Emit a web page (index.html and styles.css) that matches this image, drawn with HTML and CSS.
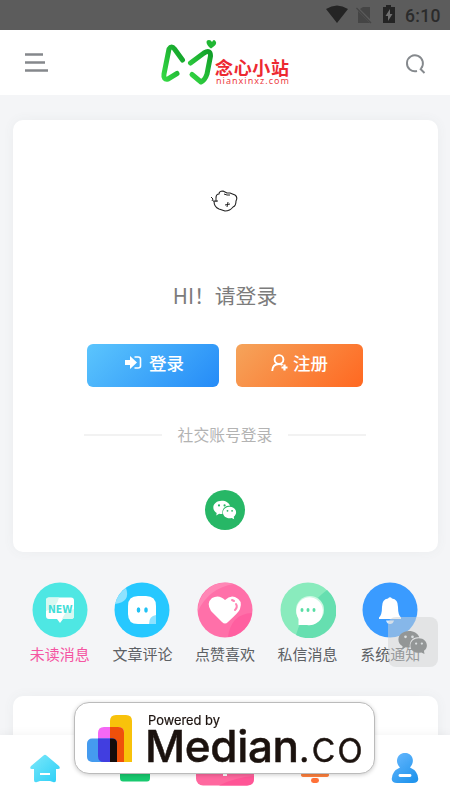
FILE: index.html
```html
<!DOCTYPE html>
<html lang="zh-CN">
<head>
<meta charset="utf-8">
<meta name="viewport" content="width=device-width, initial-scale=1">
<title>念心小站</title>
<link rel="stylesheet" href="styles.css">
</head>
<body>
<div class="statusbar">
  <svg class="status-icons" width="72" height="22" viewBox="0 0 72 22">
    <path d="M1 5Q12-2 23 5L12 19Z" fill="#242424"/>
    <path d="M38 3H45V15L35 5ZM33 7L45 19H33Z" fill="#454545"/>
    <path d="M31.500 4L46 19" stroke="#454545" stroke-width="1.300"/>
    <path d="M58 3H61V1H66V3H70V19H58Z" fill="#242424"/>
    <path d="M65 5L60.500 12H63V17L67.500 10H65Z" fill="#707070"/>
  </svg>
  <span class="clock">6:10</span>
</div>
<header class="header">
  <svg class="menu" width="24" height="21" viewBox="0 0 24 21"><path d="M0 2.500H18M0 10.500H20M0 18.500H23" stroke="#85888c" stroke-width="2.400"/></svg>
  <svg class="logo" width="132" height="48" viewBox="0 0 132 48">
    <defs><linearGradient id="green" x1="0" y1="1" x2="1" y2="0"><stop stop-color="#35d844"/><stop offset="1" stop-color="#109e28"/></linearGradient></defs>
    <path d="M22.500 21L14.500 10Q11.500 6 9 10L4 35Q3 41 8 40L17 34.500" fill="none" stroke="url(#green)" stroke-width="5" stroke-linecap="round" stroke-linejoin="round"/>
    <path d="M30.500 24L44 14Q50.500 10 50.500 17L47 35Q45 41 41 43L32 35.500" fill="none" stroke="url(#green)" stroke-width="5" stroke-linecap="round" stroke-linejoin="round"/>
    <path d="M51 9.500C46 6 45 1 49 1Q51 1 52 3Q54 -1 56 3C57 6 53 8 51 9.500Z" fill="#20b733"/>
    <text class="logo-cn" x="55" y="35.500" textLength="74">念心小站</text>
    <text class="logo-en" x="56" y="45" textLength="73">nianxinxz.com</text>
  </svg>
  <svg class="search" width="22" height="22" viewBox="0 0 22 22"><path d="M12 18A8 8 0 1 1 16 15.500M15 15.500L19.500 20" fill="none" stroke="#85898d" stroke-width="1.900"/></svg>
</header>
<main class="page">
  <section class="card login">
    <svg class="avatar" width="28" height="24" viewBox="0 0 28 24" fill="none" stroke="#222" stroke-width="1.100" stroke-linejoin="round">
      <path d="M6 9Q6 5 9 5Q9 2 13 2L17 4L20 4L25 6Q28 8 26 12Q26 17 23 18Q20 22 15 22L9 20Q4 18 4 12"/><path d="M3 12L8 12M6 9V13M1 8L3 10L2 12M14 5L17 6L20 6M15 16L20 15M18 13L17 18" stroke-width="1"/>
    </svg>
    <p class="hello">HI！请登录</p>
    <div class="actions">
      <button class="btn btn-login">
        <svg width="17" height="14" viewBox="0 0 17 14"><path d="M0 4H5V0L12 6.500L5 13V9H0Z" fill="#fff"/><path d="M9.500 1H13Q15.500 1 15.500 3V10Q15.500 12 13 12H9.500" fill="none" stroke="#fff" stroke-width="1.600"/></svg>
        <span>登录</span>
      </button>
      <button class="btn btn-register">
        <svg width="18" height="18" viewBox="0 0 18 18" fill="none" stroke="#fff"><circle cx="8" cy="5.500" r="4.400" stroke-width="1.900"/><path d="M1.200 17Q1.500 10 8 10Q10 10 11.500 11" stroke-width="1.900"/><path d="M13.500 10.500V16.500M10.500 13.500H16.500" stroke-width="2.200"/></svg>
        <span>注册</span>
      </button>
    </div>
    <div class="divider"><span>社交账号登录</span></div>
    <div class="wechat">
      <svg width="24" height="20" viewBox="0 0 28 24"><use href="#wechat"/></svg>
    </div>
  </section>

  <nav class="shortcuts">
    <a class="shortcut active">
      <svg width="56" height="56" viewBox="0 0 56 56"><circle cx="28" cy="28" r="27.500" fill="#4ee7e3"/><path d="M17 15.500H39Q42 15.500 42 18.500V34Q42 37 39 37H31L28 41L25 37H17Q14 37 14 34V18.500Q14 15.500 17 15.500Z" fill="#fff"/><path d="M14 29V18.500Q14 15.500 17 15.500H27Q25 26 14 29ZM42 27V34Q42 37 39 37H30Q33 29 42 27Z" fill="#d8f8f1"/><text class="new" x="16" y="31" textLength="24.500" lengthAdjust="spacingAndGlyphs">NEW</text></svg>
      <span>未读消息</span>
    </a>
    <a class="shortcut">
      <svg width="56" height="56" viewBox="0 0 56 56"><circle cx="28" cy="28" r="27.500" fill="#26c8ff"/><path d="M1 22A27.500 27.500 0 0 1 12 6Q17 20 1 22Z" fill="#8ee2ff"/><path d="M24 14H32Q42 14 42 24V42H24Q14 42 14 32V24Q14 14 24 14Z" fill="#fff"/><path d="M42 33V42H35Q35 34 42 33Z" fill="#8ee2ff"/><ellipse cx="24.500" cy="28" rx="1.800" ry="2.700" fill="#20c2f5"/><ellipse cx="32" cy="28" rx="1.800" ry="2.700" fill="#20c2f5"/></svg>
      <span>文章评论</span>
    </a>
    <a class="shortcut">
      <svg width="56" height="56" viewBox="0 0 56 56"><circle cx="28" cy="28" r="27.500" fill="#ff70a9"/><path d="M1 29A27.500 27.500 0 0 1 37 2Q12 6 1 29Z" fill="#ff87b6"/><path d="M31 55A27.500 27.500 0 0 0 55 31Q34 32 31 55Z" fill="#ff5fa0"/><path d="M28 18Q33 13 38 15Q46 18 43 27Q42 30 31 40Q28 43 25 40L14 29Q9 21 15 16Q22 12 28 18Z" fill="#fff"/><path d="M35 18L37 19M39 22Q41 25 38 28" fill="none" stroke="#ff85b5" stroke-width="2" stroke-linecap="round"/></svg>
      <span>点赞喜欢</span>
    </a>
    <a class="shortcut">
      <svg width="56" height="56" viewBox="0 0 56 56"><circle cx="28" cy="28" r="27.500" fill="#89ebbd"/><path d="M47 8A27.500 27.500 0 0 1 16 53Q24 25 47 8Z" fill="#66dfb0"/><circle cx="30" cy="28" r="14" fill="#cdf8e3"/><path d="M18.500 43V37A13.300 14 0 1 1 27 43Z" fill="#fff"/><g fill="#58dda4"><ellipse cx="22" cy="28" rx="1.500" ry="2"/><ellipse cx="28" cy="28" rx="1.500" ry="2"/><ellipse cx="34" cy="28" rx="1.500" ry="2"/></g></svg>
      <span>私信消息</span>
    </a>
    <a class="shortcut">
      <svg width="56" height="56" viewBox="0 0 56 56"><circle cx="28" cy="28" r="27.500" fill="#3a9bff"/><path d="M17 37V35.500Q20 33 20 25Q20 17 26 16.500Q28 14 30 16.500Q36 17 36 25Q36 33 39 35.500V37Z" fill="#fff"/><path d="M24 38.500H32Q31 42 28 42Q25 42 24 38.500Z" fill="#d9ebff"/></svg>
      <span>系统通知</span>
    </a>
  </nav>
  <section class="card next-card"></section>
</main>

<a class="contact"><svg width="30" height="25" viewBox="0 0 28 24">
  <g id="wechat"><path class="bubble" d="M10 1C4.500 1 0 4.500 0 9C0 12 1.500 14 4 15.500L3.500 18.500L7 16.500Q10 17.300 11 16.500C10 10 15 6 20 7C19 3.500 15 1 10 1Z"/><path class="bubble" d="M19.500 8C15 8 11.500 11 11.500 15C11.500 20 17 23 22 21.500L25 23L24.500 20C30 16 27 8 19.500 8Z"/><g class="eyes"><circle cx="6.800" cy="6.500" r="1.300"/><circle cx="13.500" cy="6.500" r="1.300"/><circle cx="17" cy="13" r="1.100"/><circle cx="22.500" cy="13" r="1.100"/></g></g>
</svg></a>

<nav class="tabbar">
  <a class="tab"><svg width="32" height="30" viewBox="0 0 32 30"><defs><linearGradient id="home" x2="1" y2="1"><stop stop-color="#7de8fa"/><stop offset="1" stop-color="#2bcff7"/></linearGradient></defs><path d="M14.500 1.500Q16 0 17.500 1.500L30 12Q32 15 29 15H27V26Q27 29 24 28L21 27H11L8 28Q5 29 5 26V15H3Q0 15 2 12Z" fill="url(#home)"/><path d="M11 20H21" stroke="#fff" stroke-width="2"/></svg></a>
  <a class="tab"><svg width="32" height="30" viewBox="0 0 32 30"><path d="M1 1H31V24Q31 27.500 28 27.500H4Q1 27.500 1 24Z" fill="#18c96f"/></svg></a>
  <a class="tab"><svg width="58" height="40" viewBox="0 0 58 40"><rect x="0" y="0" width="58" height="38.500" rx="7" fill="#ff689f"/><path d="M23 38.500Q40 30 58 29V32Q58 38.500 51 38.500Z" fill="#ff5596"/><path d="M29 15V29" stroke="#fff" stroke-width="4"/></svg></a>
  <a class="tab"><svg width="32" height="30" viewBox="0 0 32 30"><path d="M5 3H27L30 21Q30 23 27 23H5Q2 23 2 21Z" fill="#ff813e"/><rect x="12" y="24" width="8" height="5" rx="2.400" fill="#ff7138"/></svg></a>
  <a class="tab"><svg width="28" height="32" viewBox="0 0 28 32"><defs><linearGradient id="person" x2=".7" y2="1"><stop stop-color="#69b9ff"/><stop offset="1" stop-color="#2295ed"/></linearGradient></defs><path d="M9 15.500C3 9 7 1 14 1C21 1 25 9 19 15.500Q27 19 27.300 27Q27 31 22 31H6Q1 31 .700 27Q1 19 9 15.500Z" fill="url(#person)"/><path d="M9 23.500H19" stroke="#fff" stroke-width="2.800" stroke-linecap="round"/></svg></a>
</nav>

<aside class="median">
  <svg class="median-mark" width="46" height="48" viewBox="0 0 46 48">
    <path d="M23 47V6Q23 0 29 0H39Q45 0 45 6V47Z" fill="#f8c20b"/>
    <path d="M11 47V18Q11 12 17 12H31Q37 12 37 18V47Z" fill="#f568f5"/>
    <path d="M23 12H31Q37 12 37 18V47H23Z" fill="#ef500b"/>
    <rect y="23.500" width="30" height="23.500" rx="5" fill="#459bef"/>
    <path d="M11 23.500H25Q30 23.500 30 28.500V47H17Q11 47 11 41Z" fill="#413ee0"/>
    <path d="M23 23.500H25Q30 23.500 30 28.500V47H23Z" fill="#160d0b"/>
  </svg>
  <svg class="median-words" width="220" height="70" viewBox="0 0 220 70">
    <text class="powered" x="1" y="22" textLength="72" lengthAdjust="spacingAndGlyphs">Powered by</text>
    <text class="word" x="-2" y="59" textLength="154">Median</text>
    <text class="word light" x="151" y="59" textLength="65">.co</text>
  </svg>
</aside>
</body>
</html>
```

FILE: styles.css
```css
* { box-sizing: border-box; }
html, body { height: 100%; overflow: hidden; }
body {
  margin: 0;
  background: #f4f5f7;
  font-family: "Noto Sans CJK SC", sans-serif;
  color: #5c6064;
}
svg { display: block; flex: none; }
.statusbar {
  height: 30px;
  background: #5c5c5c;
  display: flex;
  align-items: center;
  justify-content: flex-end;
  padding-right: 10px;
  gap: 8px;
}
.status-icons { margin-top: -1px; }
.clock {
  font: 500 17.500px/30px Roboto, sans-serif;
  color: #2b2b2b;
  width: 35px;
  padding-top: 1px;
  letter-spacing: .3px;
  white-space: nowrap;
}
.header {
  height: 65px;
  background: #fff;
  display: flex;
  align-items: flex-start;
  padding: 9px 23px 0 25px;
}
.menu { margin-top: 13px; }
.logo { margin-left: 111px; overflow: visible; }
.search { margin: 14px 0 0 auto; }
.logo-cn { font-size: 18px; font-weight: 700; fill: #ed2931; }
.logo-en { font: 9px "Noto Sans", sans-serif; fill: #ed3b42; }
.page { padding: 25px 12.5px 0; }
.card {
  background: #fff;
  border-radius: 10px;
  box-shadow: 0 0 12px rgba(90, 100, 110, .06);
}
.login {
  height: 432px;
  display: flex;
  flex-direction: column;
  align-items: center;
  padding-top: 69px;
}
.avatar { margin-right: 3px; }
.hello {
  margin: 66px 0 0;
  font-size: 20.8px;
  line-height: 32px;
  color: #7c7c7c;
}
.actions { display: flex; gap: 17px; margin-top: 33px; }
.btn {
  height: 43px;
  border: 0;
  border-radius: 6px;
  display: flex;
  align-items: center;
  justify-content: center;
  padding: 0 0 5px;
  color: #fff;
  font: 500 17.500px/26px "Noto Sans CJK SC", sans-serif;
}
.btn-login { width: 132px; gap: 7px; padding-left: 3px; background: linear-gradient(135deg, #5bc5fd, #258bf7); }
.btn-register { width: 127px; gap: 4px; background: linear-gradient(135deg, #f5a45b, #ff6821); }
.divider {
  width: 282px;
  margin-top: 36px;
  display: flex;
  align-items: center;
  gap: 16px;
  font-size: 15.800px;
  line-height: 24px;
  color: #b3b3b3;
  white-space: nowrap;
}
.divider::before, .divider::after { content: ""; height: 2px; flex: 1; background: #f2f2f2; }
.wechat {
  width: 40px;
  height: 40px;
  margin-top: 43px;
  border-radius: 50%;
  background: #27b766;
  display: grid;
  place-items: center;
  color: #27b766;
  --bubble: #fff;
}
.bubble { fill: var(--bubble); }
.eyes { fill: currentColor; }
.shortcuts { display: flex; margin: 30px 6px 0; }
.shortcut {
  flex: 1;
  display: flex;
  flex-direction: column;
  align-items: center;
  font-size: 15px;
  line-height: 24px;
}
.shortcut span { margin-top: 4px; }
.active { color: #f555a2; }
.new { font: 700 11px "DejaVu Sans", sans-serif; fill: #43ded8; }
.next-card { height: 90px; margin-top: 30px; }
.contact {
  position: fixed;
  right: 12.5px;
  top: 617px;
  width: 50px;
  height: 50px;
  border-radius: 8px;
  background: rgba(210, 212, 212, .5);
  display: grid;
  place-items: center;
  color: #dadedf;
  --bubble: #939696;
}
.tabbar {
  position: fixed;
  left: 0;
  right: 0;
  bottom: 0;
  height: 65px;
  background: #fff;
  display: flex;
  justify-content: space-around;
  align-items: flex-end;
  padding-bottom: 16px;
  box-shadow: 0 0 10px rgba(0, 0, 0, .06);
}
.tab { width: 90px; display: flex; justify-content: center; }
.tab:nth-child(3) { margin-bottom: -3px; }
.median {
  position: fixed;
  left: 74px;
  top: 702px;
  width: 301px;
  height: 72px;
  border: 1px solid #bbb;
  border-radius: 15px;
  background: #fff;
  box-shadow: 0 1px 4px rgba(0, 0, 0, .2);
  display: flex;
  padding: 12px 0 0 12px;
}
.median-words { margin: -12px 0 0 14px; overflow: visible; }
.powered { font: 400 13px Inter, sans-serif; fill: #1b120e; stroke: #1b120e; stroke-width: .2px; }
.word { font: 500 44px Inter, sans-serif; fill: #1b120e; stroke: #1b120e; stroke-width: .5px; }
.light { font-weight: 300; }
```
